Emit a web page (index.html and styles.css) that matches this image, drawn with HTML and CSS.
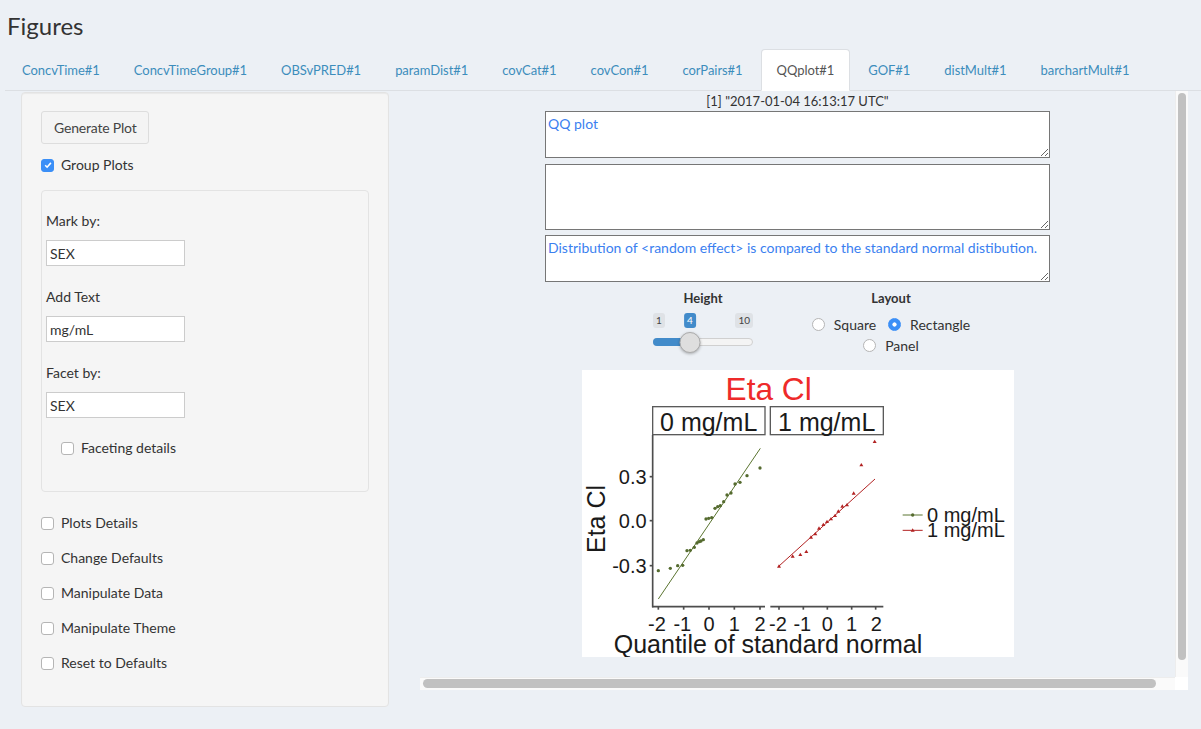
FILE: index.html
```html
<!DOCTYPE html>
<html lang="en">
<head>
<meta charset="utf-8">
<title>Figures</title>
<link rel="stylesheet" href="styles.css">
</head>
<body>
<div class="page">
  <h1 class="page-title">Figures</h1>
  <ul class="tabs">
    <li><a>ConcvTime#1</a></li>
    <li><a>ConcvTimeGroup#1</a></li>
    <li><a>OBSvPRED#1</a></li>
    <li><a>paramDist#1</a></li>
    <li><a>covCat#1</a></li>
    <li><a>covCon#1</a></li>
    <li><a>corPairs#1</a></li>
    <li class="active"><a>QQplot#1</a></li>
    <li><a>GOF#1</a></li>
    <li><a>distMult#1</a></li>
    <li><a>barchartMult#1</a></li>
  </ul>
  <div class="content-row">
    <aside class="well sidebar">
      <button class="btn" type="button">Generate Plot</button>
      <label class="check"><input class="cb" type="checkbox" checked><span>Group Plots</span></label>
      <div class="well inner-well">
        <div class="form-group">
          <label class="field-label">Mark by:</label>
          <input class="text-input" type="text" value="SEX">
        </div>
        <div class="form-group">
          <label class="field-label">Add Text</label>
          <input class="text-input" type="text" value="mg/mL">
        </div>
        <div class="form-group last">
          <label class="field-label">Facet by:</label>
          <input class="text-input" type="text" value="SEX">
        </div>
        <label class="check indent"><input class="cb" type="checkbox"><span>Faceting details</span></label>
      </div>
      <div class="check-list">
        <label class="check"><input class="cb" type="checkbox"><span>Plots Details</span></label>
        <label class="check"><input class="cb" type="checkbox"><span>Change Defaults</span></label>
        <label class="check"><input class="cb" type="checkbox"><span>Manipulate Data</span></label>
        <label class="check"><input class="cb" type="checkbox"><span>Manipulate Theme</span></label>
        <label class="check"><input class="cb" type="checkbox"><span>Reset to Defaults</span></label>
      </div>
    </aside>
    <main class="main-col">
      <div class="scroll-frame">
        <div class="viewport">
          <div class="scroll-content">
            <div class="timestamp">[1] "2017-01-04 16:13:17 UTC"</div>
            <textarea class="ta ta-short gap6">QQ plot</textarea>
            <textarea class="ta ta-tall gap5"></textarea>
            <textarea class="ta ta-short">Distribution of &lt;random effect&gt; is compared to the standard normal distibution.</textarea>
            <div class="controls">
              <div class="ctrl height-ctrl">
                <div class="ctrl-label">Height</div>
                <div class="slider">
                  <span class="sl sl-min">1</span>
                  <span class="sl sl-val" style="left:37%">4</span>
                  <span class="sl sl-max">10</span>
                  <div class="track"><div class="fill" style="width:37%"></div></div>
                  <div class="handle" style="left:37%"></div>
                </div>
              </div>
              <div class="ctrl layout-ctrl">
                <div class="ctrl-label">Layout</div>
                <div class="radios">
                  <label class="radio"><input class="rb" type="radio" name="layout"><span>Square</span></label>
                  <label class="radio"><input class="rb" type="radio" name="layout" checked><span>Rectangle</span></label>
                  <label class="radio"><input class="rb" type="radio" name="layout"><span>Panel</span></label>
                </div>
              </div>
            </div>
            <svg class="plot" width="432" height="287" viewBox="3 3 1296 861" xmlns="http://www.w3.org/2000/svg">
              <rect x="3" y="3" width="1296" height="861" fill="#ffffff"/>
              <text class="p-title" x="563" y="92" text-anchor="middle">Eta Cl</text>
              <rect class="strip" x="215" y="113" width="337" height="84"/>
              <rect class="strip" x="568" y="113" width="339" height="84"/>
              <text class="p-strip" x="383" y="185" text-anchor="middle">0 mg/mL</text>
              <text class="p-strip" x="737" y="185" text-anchor="middle">1 mg/mL</text>
              <g class="axis">
                <line x1="215" y1="198" x2="215" y2="715"/>
                <line x1="213" y1="713" x2="552" y2="713"/>
                <line x1="568" y1="713" x2="907" y2="713"/>
                <line x1="206" y1="323" x2="215" y2="323"/>
                <line x1="206" y1="455" x2="215" y2="455"/>
                <line x1="206" y1="590" x2="215" y2="590"/>
                <line x1="232" y1="713" x2="232" y2="722"/>
                <line x1="308" y1="713" x2="308" y2="722"/>
                <line x1="384" y1="713" x2="384" y2="722"/>
                <line x1="460" y1="713" x2="460" y2="722"/>
                <line x1="537" y1="713" x2="537" y2="722"/>
                <line x1="594" y1="713" x2="594" y2="722"/>
                <line x1="667" y1="713" x2="667" y2="722"/>
                <line x1="739" y1="713" x2="739" y2="722"/>
                <line x1="812" y1="713" x2="812" y2="722"/>
                <line x1="884" y1="713" x2="884" y2="722"/>
              </g>
              <g class="p-tick" text-anchor="end">
                <text x="197" y="344">0.3</text>
                <text x="197" y="476">0.0</text>
                <text x="197" y="611">-0.3</text>
              </g>
              <g class="p-tick" text-anchor="middle">
                <text x="228" y="787">-2</text>
                <text x="304" y="787">-1</text>
                <text x="384" y="787">0</text>
                <text x="460" y="787">1</text>
                <text x="537" y="787">2</text>
                <text x="591" y="787">-2</text>
                <text x="664" y="787">-1</text>
                <text x="739" y="787">0</text>
                <text x="812" y="787">1</text>
                <text x="886" y="787">2</text>
              </g>
              <text class="p-axis" x="561" y="851" text-anchor="middle">Quantile of standard normal</text>
              <text class="p-axis" transform="translate(72 450) rotate(-90)" text-anchor="middle">Eta Cl</text>
              <line class="ln-green" x1="232" y1="690" x2="538" y2="238"/>
              <g class="pt-green">
                <circle cx="232" cy="605" r="5"/><circle cx="268" cy="598" r="5"/><circle cx="290" cy="590" r="5"/>
                <circle cx="305" cy="589" r="5"/><circle cx="318" cy="545" r="5"/><circle cx="328" cy="544" r="5"/>
                <circle cx="340" cy="535" r="5"/><circle cx="348" cy="522" r="5"/><circle cx="355" cy="518" r="5"/>
                <circle cx="360" cy="516" r="5"/><circle cx="367" cy="512" r="5"/><circle cx="375" cy="450" r="5"/>
                <circle cx="383" cy="448" r="5"/><circle cx="392" cy="446" r="5"/><circle cx="402" cy="418" r="5"/>
                <circle cx="410" cy="413" r="5"/><circle cx="418" cy="410" r="5"/><circle cx="428" cy="398" r="5"/>
                <circle cx="438" cy="378" r="5"/><circle cx="450" cy="372" r="5"/><circle cx="462" cy="345" r="5"/>
                <circle cx="477" cy="340" r="5"/><circle cx="498" cy="320" r="5"/><circle cx="537" cy="297" r="5"/>
              </g>
              <line class="ln-red" x1="593" y1="592" x2="882" y2="330"/>
              <g class="pt-red">
                <polygon points="588,596 600,596 594,586"/><polygon points="629,566 641,566 635,556"/>
                <polygon points="652,561 664,561 658,551"/><polygon points="670,552 682,552 676,542"/>
                <polygon points="684,509 696,509 690,499"/><polygon points="697,499 709,499 703,489"/>
                <polygon points="708,482 720,482 714,472"/><polygon points="721,471 733,471 727,461"/>
                <polygon points="732,462 744,462 738,452"/><polygon points="744,454 756,454 750,444"/>
                <polygon points="756,444 768,444 762,434"/><polygon points="766,431 778,431 772,421"/>
                <polygon points="778,416 790,416 784,406"/><polygon points="792,412 804,412 798,402"/>
                <polygon points="812,377 824,377 818,367"/><polygon points="835,292 847,292 841,282"/>
                <polygon points="875,222 887,222 881,212"/>
              </g>
              <line class="ln-green" x1="965" y1="438" x2="1025" y2="438"/>
              <circle class="pt-green" cx="995" cy="438" r="5"/>
              <line class="ln-red" x1="965" y1="484" x2="1025" y2="484"/>
              <polygon class="pt-red" points="989,488 1001,488 995,478"/>
              <text class="p-tick" x="1038" y="458">0 mg/mL</text>
              <text class="p-tick" x="1038" y="505">1 mg/mL</text>
            </svg>
          </div>
        </div>
        <div class="vbar"><div class="vthumb"></div></div>
        <div class="hbar"><div class="hthumb"></div></div>
        <div class="corner"></div>
      </div>
    </main>
  </div>
</div>
</body>
</html>
```

FILE: styles.css
```css
* { box-sizing: border-box; }

html, body {
  margin: 0;
  background: #ecf0f5;
}

body {
  font-family: Lato, "Noto Sans", sans-serif;
  font-size: 14px;
  color: #333;
  width: 1201px;
  height: 729px;
  overflow: hidden;
}

.page-title {
  margin: 12px 0 9px 7px;
  font-size: 24px;
  font-weight: 400;
  line-height: 28px;
  color: #333;
}

.tabs {
  list-style: none;
  margin: 0 0 0 5px;
  padding: 0 0 0 1px;
  display: flex;
  border-bottom: 1px solid #dcdfe3;
}

.tabs li {
  margin-bottom: -1px;
}

.tabs a {
  display: block;
  padding: 10px 15px;
  margin-right: 2px;
  line-height: 20px;
  border: 1px solid transparent;
  border-radius: 4px 4px 0 0;
  color: #3c8dbc;
  font-size: 13px;
  letter-spacing: -0.05px;
}

.tabs li.active a {
  background: #fff;
  color: #555;
  border-color: #dcdfe3 #dcdfe3 transparent;
}

.content-row {
  display: flex;
  align-items: flex-start;
}

.well {
  background: #f5f5f5;
  border: 1px solid #e3e3e3;
  border-radius: 4px;
  box-shadow: inset 0 1px 1px rgba(0, 0, 0, 0.05);
}

.sidebar {
  width: 368px;
  margin: 1px 0 0 21px;
  padding: 18px 19px 19px;
  display: flex;
  flex-direction: column;
  align-items: flex-start;
}

.btn {
  font-family: inherit;
  font-size: 14px;
  color: #444;
  background: #f4f4f4;
  border: 1px solid #ddd;
  border-radius: 3px;
  padding: 6px 12px;
  line-height: 19px;
  height: 33px;
  letter-spacing: -0.2px;
}

.check {
  display: flex;
  align-items: center;
  gap: 7px;
  height: 20px;
  line-height: 20px;
}

.sidebar > .check {
  margin-top: 11px;
}

.cb {
  appearance: none;
  -webkit-appearance: none;
  width: 13px;
  height: 13px;
  margin: 0;
  border: 1px solid #b5b5b5;
  border-radius: 3px;
  background: #fff;
  flex: none;
}

.cb:checked {
  border-color: #3b8ff7;
  background: #3b8ff7 url("data:image/svg+xml,%3Csvg xmlns='http://www.w3.org/2000/svg' viewBox='0 0 10 10'%3E%3Cpath d='M2.2 5.3l1.9 1.9 3.8-4.3' fill='none' stroke='white' stroke-width='1.6'/%3E%3C/svg%3E") center / 10px 10px no-repeat;
}

.inner-well {
  width: 100%;
  margin-top: 15px;
  padding: 20px 4px 33px;
  box-shadow: none;
}

.form-group {
  display: flex;
  flex-direction: column;
  align-items: flex-start;
  margin-bottom: 21px;
}

.form-group.last {
  margin-bottom: 20px;
}

.field-label {
  line-height: 20px;
  margin-bottom: 9px;
}

.text-input {
  width: 139px;
  height: 26px;
  border: 1px solid #ccc;
  padding: 0 3px;
  font-family: inherit;
  font-size: 14px;
  color: #333;
  background: #fff;
  border-radius: 0;
}

.indent {
  margin-left: 15px;
}

.check-list {
  display: flex;
  flex-direction: column;
  gap: 15px;
  margin-top: 21px;
  margin-bottom: 14px;
}

.main-col {
  margin-left: 31px;
}

.scroll-frame {
  display: grid;
  grid-template-columns: 755px 13px;
  grid-template-rows: 586px 13px;
}

.viewport {
  overflow: hidden;
}

.vbar {
  background: #fafafa;
  border-left: 1px solid #ededed;
  padding: 2px 2px 0 2px;
}

.vthumb {
  height: 567px;
  background: #c1c1c1;
  border-radius: 5px;
}

.hbar {
  background: #fafafa;
  border-top: 1px solid #ededed;
  padding: 1px 0 0 3px;
}

.hthumb {
  width: 733px;
  height: 9px;
  background: #c1c1c1;
  border-radius: 5px;
}

.corner {
  background: #fff;
}

.scroll-content {
  width: 780px;
  height: 606px;
  padding-right: 25px;
  display: flex;
  flex-direction: column;
  align-items: center;
}

.timestamp {
  font-size: 13px;
  line-height: 20px;
  color: #333;
}

.ta {
  display: block;
  width: 505px;
  border: 1px solid #767676;
  padding: 2px;
  font-family: Lato, "Noto Sans", sans-serif;
  font-size: 14px;
  line-height: 20px;
  color: #3b7ff0;
  background: #fff;
  margin: 0;
  flex: none;
}

.ta-short { height: 47px; }
.ta-tall { height: 66px; }
.gap6 { margin-bottom: 6px; }
.gap5 { margin-bottom: 5px; }

.controls {
  display: flex;
  gap: 28px;
  margin: 8px 0 0 9px;
}

.ctrl-label {
  font-size: 13px;
  font-weight: 700;
  line-height: 16px;
  text-align: center;
}

.height-ctrl { width: 150px; }
.layout-ctrl { width: 170px; }

.slider {
  position: relative;
  width: 100px;
  height: 50px;
  margin: 0 auto;
}

.sl {
  position: absolute;
  top: 7px;
  font-size: 10px;
  line-height: 15px;
  padding: 0 3px;
  background: #dfe2e6;
  color: #444;
  border-radius: 3px;
}

.sl-min { left: 0; }
.sl-max { right: 0; }
.sl-val {
  background: #428bca;
  color: #fff;
  transform: translateX(-50%);
}

.track {
  position: absolute;
  top: 32px;
  left: 0;
  right: 0;
  height: 8px;
  border-radius: 4px;
  background: #f4f4f4;
  border: 1px solid #d0d0d0;
}

.fill {
  position: absolute;
  left: -1px;
  top: -1px;
  bottom: -1px;
  background: #428bca;
  border-radius: 4px 0 0 4px;
}

.handle {
  position: absolute;
  top: 26px;
  width: 21px;
  height: 21px;
  border-radius: 50%;
  background: #dedede;
  border: 1px solid #acacac;
  box-shadow: 0 1px 3px rgba(0, 0, 0, 0.3);
  transform: translateX(-50%);
}

.radios {
  display: flex;
  flex-wrap: wrap;
  justify-content: center;
  column-gap: 12px;
  width: 170px;
  margin-top: 8px;
}

.radio {
  display: flex;
  align-items: center;
  gap: 9px;
  line-height: 21px;
  font-size: 14px;
}

.rb {
  appearance: none;
  -webkit-appearance: none;
  width: 13px;
  height: 13px;
  margin: 0;
  border: 1px solid #b5b5b5;
  border-radius: 50%;
  background: #fff;
  flex: none;
}

.rb:checked {
  border-color: #3b8ff7;
  background: radial-gradient(circle, #fff 0 1.8px, #3b8ff7 2.4px);
}

.plot {
  display: block;
  margin-top: 14px;
  flex: none;
}

.plot text {
  font-family: "Liberation Sans", Arial, sans-serif;
}

.p-title { font-size: 95px; fill: #ee2a2a; }
.p-strip { font-size: 75px; fill: #1a1a1a; }
.p-tick { font-size: 60px; fill: #1a1a1a; }
.p-axis { font-size: 75px; fill: #1a1a1a; }

.strip {
  fill: #ffffff;
  stroke: #5a5a5a;
  stroke-width: 4;
}

.axis line {
  stroke: #4d4d4d;
  stroke-width: 5;
}

.ln-green { stroke: #5b7530; stroke-width: 3; }
.ln-red { stroke: #b22222; stroke-width: 3; }
.pt-green { fill: #556b2f; }
.pt-red { fill: #b22222; }
```
